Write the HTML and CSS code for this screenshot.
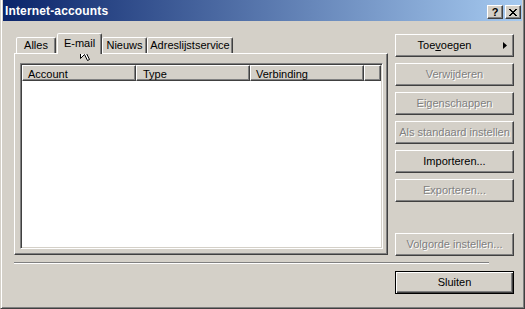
FILE: index.html
```html
<!DOCTYPE html>
<html>
<head>
<meta charset="utf-8">
<title>Internet-accounts</title>
<link rel="stylesheet" href="styles.css">
</head>
<body>
<div class="window">
  <div class="titlebar">
    <span class="title">Internet-accounts</span>
    <div class="caption-buttons">
      <div class="cap-btn help">?</div>
      <div class="cap-btn close">
        <svg width="8" height="7" viewBox="0 0 8 7" shape-rendering="crispEdges"><path fill="#000" d="M0 0h2v1h-2z M6 0h2v1h-2z M1 1h2v1h-2z M5 1h2v1h-2z M2 2h4v1h-4z M3 3h2v1h-2z M2 4h4v1h-4z M1 5h2v1h-2z M5 5h2v1h-2z M0 6h2v1h-2z M6 6h2v1h-2z"/></svg>
      </div>
    </div>
  </div>
  <div class="main">
    <div class="left">
      <div class="tabs">
        <div class="tab t-alles">Alles</div>
        <div class="tab active t-email">E-mail</div>
        <div class="tab t-nieuws">Nieuws</div>
        <div class="tab t-adres">Adreslijstservice</div>
      </div>
      <div class="panel">
        <div class="listview">
          <div class="header">
            <div class="col c1">Account</div>
            <div class="col c2">Type</div>
            <div class="col c3">Verbinding</div>
            <div class="col filler"></div>
          </div>
        </div>
      </div>
    </div>
    <div class="right">
      <div class="btn menu">Toe<u>v</u>oegen<span class="arrow"></span></div>
      <div class="btn disabled">Verwijderen</div>
      <div class="btn disabled">Eigenschappen</div>
      <div class="btn disabled">Als standaard instellen</div>
      <div class="btn">Importeren...</div>
      <div class="btn disabled">Exporteren...</div>
      <div class="btn disabled volgorde">Volgorde instellen...</div>
    </div>
  </div>
  <div class="separator"></div>
  <div class="bottom">
    <div class="btn default">Sluiten</div>
  </div>
  <svg class="cursor" width="12" height="19" viewBox="0 0 12 19"><path d="M0.5 0.5 V16.5 L4.5 12.5 L7.5 18.5 L9.5 17.5 L6.5 11.5 L11.5 11.5 Z" fill="#fff" stroke="#000" stroke-width="1" stroke-linejoin="miter"/></svg>
</div>
</body>
</html>
```
FILE: styles.css
```css
* { box-sizing: border-box; }
html, body { margin: 0; padding: 0; }
body {
  width: 525px;
  height: 309px;
  overflow: hidden;
  background: #d4d0c8;
  font-family: "Liberation Sans", Arial, sans-serif;
  font-size: 11px;
  line-height: 13px;
  color: #000;
}
.window {
  position: relative;
  width: 525px;
  height: 309px;
  background: #d4d0c8;
  border-style: solid;
  border-width: 0 1px 1px 1px;
  border-color: #404040 #404040 #404040 #d4d0c8;
  box-shadow: inset 1px 0 #fff, inset -1px -1px #808080;
  padding: 0 2px 2px 2px;
  display: flex;
  flex-direction: column;
}
.titlebar {
  height: 21px;
  flex: none;
  display: flex;
  background: linear-gradient(to right, #0a246a, #a6caf0);
  color: #fff;
}
.title {
  flex: 1;
  font-weight: bold;
  font-size: 12px;
  line-height: 19px;
  padding: 2px 0 0 2px;
  letter-spacing: 0.15px;
}
.caption-buttons {
  display: flex;
  gap: 2px;
  margin: 5px 1px 0 0;
}
.cap-btn {
  width: 16px;
  height: 14px;
  background: #d4d0c8;
  border: 1px solid;
  border-color: #fff #404040 #404040 #fff;
  box-shadow: inset -1px -1px #808080;
  display: flex;
  align-items: center;
  justify-content: center;
  color: #000;
  font-weight: bold;
  font-size: 11px;
  line-height: 11px;
}
.cap-btn.close svg { margin-right: 1px; }
.main {
  display: flex;
  margin-top: 12px;
}
.left {
  margin-left: 11px;
  width: 374px;
  display: flex;
  flex-direction: column;
}
.tabs {
  display: flex;
  align-items: flex-end;
  height: 20px;
  padding-left: 2px;
}
.tab {
  height: 16px;
  border: 1px solid;
  border-bottom: 0;
  border-color: #fff #404040 transparent #fff;
  box-shadow: inset -1px 0 #808080;
  border-radius: 2px 2px 0 0;
  padding-top: 1px;
  text-align: center;
  background: #d4d0c8;
}
.tab.active {
  height: 21px;
  margin-bottom: -1px;
  padding-top: 3px;
  z-index: 1;
}
.t-alles { width: 40px; margin-right: 1px; }
.t-email { width: 45px; }
.t-nieuws { width: 45px; }
.t-adres { width: 86px; }
.panel {
  height: 202px;
  border: 1px solid;
  border-color: #fff #404040 #404040 #fff;
  box-shadow: inset -1px -1px #808080;
  padding: 9px 4px 5px 5px;
}
.listview {
  width: 363px;
  height: 186px;
  border: 1px solid;
  border-color: #808080 #fff #fff #808080;
  box-shadow: inset 1px 1px #404040, inset -1px -1px #d4d0c8;
  padding: 1px;
  background: #fff;
}
.header {
  display: flex;
  height: 16px;
}
.col {
  height: 16px;
  border: 1px solid;
  border-color: #fff #404040 #404040 #fff;
  box-shadow: inset -1px -1px #808080;
  background: #d4d0c8;
  padding: 2px 0 0 5px;
  line-height: 12px;
  white-space: nowrap;
  overflow: hidden;
}
.c1 { width: 114px; }
.c2 { width: 114px; padding-left: 6px; }
.c3 { width: 114px; }
.filler { width: 17px; }
.right {
  margin-left: 7px;
  width: 119px;
  padding-top: 1px;
  display: flex;
  flex-direction: column;
  gap: 6px;
}
.btn {
  width: 119px;
  height: 23px;
  flex: none;
  position: relative;
  display: flex;
  align-items: center;
  justify-content: center;
  border: 1px solid;
  border-color: #fff #404040 #404040 #fff;
  box-shadow: inset -1px -1px #808080;
  background: #d4d0c8;
  white-space: nowrap;
}
.btn.disabled {
  color: #808080;
  text-shadow: 1px 1px 0 #fff;
}
.btn.menu { padding-right: 20px; }
.btn u { text-decoration: underline; text-underline-offset: 1px; }
.arrow {
  position: absolute;
  right: 6px;
  top: 7px;
  width: 4px;
  height: 7px;
  background: #000;
  clip-path: polygon(0 0, 100% 50%, 0 100%);
}
.volgorde { margin-top: 25px; }
.separator {
  margin: 6px 0 0 11px;
  width: 475px;
  height: 2px;
  border-top: 1px solid #808080;
  border-bottom: 1px solid #fff;
}
.bottom {
  display: flex;
  justify-content: flex-end;
  padding-right: 8px;
  margin-top: 7px;
}
.btn.default {
  border: 1px solid #000;
  box-shadow: inset 1px 1px #fff, inset -1px -1px #404040, inset -2px -2px #808080;
}
.cursor {
  position: absolute;
  left: 79px;
  top: 42px;
}
```
